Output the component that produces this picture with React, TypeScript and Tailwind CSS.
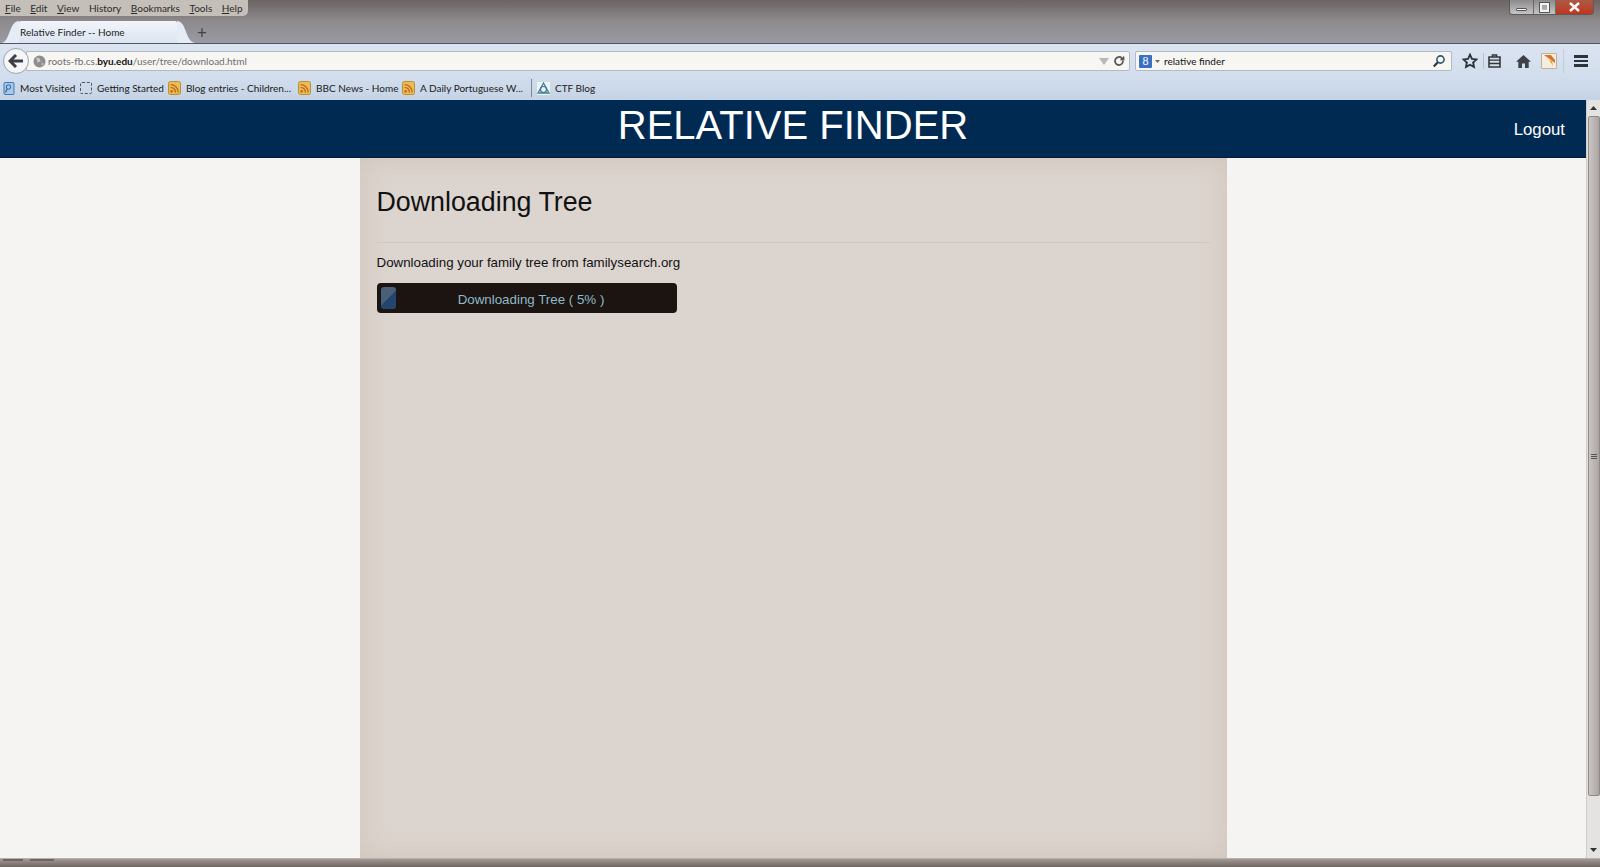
const ui = "font-['Lato','Noto_Sans',sans-serif]"

function Feed() {
  return (
    <svg width="13" height="14" viewBox="0 0 13 14" className="shrink-0">
      <rect x="0.5" y="0.5" width="12" height="13" rx="2" fill="#e8bd55" stroke="#b98f35" />
      <circle cx="3.6" cy="10.4" r="1.3" fill="#c9661c" />
      <path d="M2.5 6.4a5 5 0 0 1 5 5M2.5 3.6a7.8 7.8 0 0 1 7.8 7.8" fill="none" stroke="#c9661c" strokeWidth="1.4" />
    </svg>
  )
}

function Bookmark({ icon, label, width }: { icon: React.ReactNode; label: string; width: string }) {
  return (
    <div className={`flex items-center gap-[5px] ${width}`}>
      {icon}
      <span className="whitespace-nowrap">{label}</span>
    </div>
  )
}

function Menu() {
  const items = [
    ["F", "ile"],
    ["E", "dit"],
    ["V", "iew"],
    ["", "History"],
    ["B", "ookmarks"],
    ["T", "ools"],
    ["H", "elp"],
  ]
  return (
    <div className="flex h-[16px] w-[248px] items-center gap-[9.6px] rounded-br-[5px] bg-[#c4bfb8] pl-[5px] text-[10px] text-[#2c2a2a]">
      {items.map(([first, rest]) => (
        <span key={rest}>
          <span className="underline">{first}</span>
          {rest}
        </span>
      ))}
    </div>
  )
}

function WindowButtons() {
  return (
    <div className="flex h-[15px] w-[85px] overflow-hidden rounded-b-[4px] border border-t-0 border-[#5d5a5a]">
      <div className="flex w-[23px] items-end justify-center bg-gradient-to-b from-[#8d8a8a] to-[#c5c5c8] pb-[3px]">
        <div className="h-[3px] w-[11px] rounded-[1px] border border-[#555] bg-white" />
      </div>
      <div className="flex w-[23px] items-center justify-center border-x border-[#6d6a6a] bg-gradient-to-b from-[#8d8a8a] to-[#c5c5c8]">
        <div className="h-[9px] w-[9px] border-2 border-[#f3f3f3] outline outline-1 outline-[#555]" />
      </div>
      <div className="flex flex-1 items-center justify-center bg-gradient-to-b from-[#a85a45] to-[#c2321c] text-[12px] font-bold leading-none text-white">
        <svg width="13" height="10" viewBox="0 0 13 10">
          <path d="M2 1l9 8M11 1l-9 8" stroke="#fff" strokeWidth="2.4" />
        </svg>
      </div>
    </div>
  )
}

function TabStrip() {
  return (
    <div className="flex h-[23px] items-end pl-[1px]">
      <svg width="18" height="23" viewBox="0 0 18 23" className="shrink-0">
        <path d="M0 23C9 23 8 1 18 1V23Z" fill="#e6ecf5" />
      </svg>
      <div className="flex h-[22px] w-[158px] items-center rounded-t-[2px] bg-gradient-to-b from-[#f2f5fa] to-[#dbe4f1] pl-[1px] text-[10px] text-[#222]">
        Relative Finder -- Home
      </div>
      <svg width="19" height="23" viewBox="0 0 19 23" className="shrink-0">
        <path d="M0 1C10 1 8 23 19 23H0Z" fill="#e6ecf5" />
      </svg>
      <div className="ml-[1px] flex h-[22px] items-center text-[17px] leading-none text-[#444]">+</div>
    </div>
  )
}

function NavBar() {
  return (
    <div className="flex h-[32px] items-center bg-gradient-to-b from-[#dbe4f1] to-[#d2deed] pl-[3px] pr-[6px] pt-[2px]">
      <div className="z-10 flex h-[26px] w-[26px] shrink-0 items-center justify-center rounded-full border border-[#9aa3ae] bg-[#f5f6f8]">
        <svg width="16" height="14" viewBox="0 0 16 14">
          <path d="M8 1L2 7l6 6M2.5 7H15" fill="none" stroke="#3c4046" strokeWidth="3" />
        </svg>
      </div>
      <div className="-ml-[3px] flex h-[20px] w-[1104px] items-center rounded-r-[2px] border border-[#b3bac4] bg-[#f7f6f3] pl-[6px] pr-[4px] text-[10px] text-[#6d6d6d]">
        <svg width="13" height="13" viewBox="0 0 12 12" className="mr-[2px] shrink-0">
          <circle cx="6" cy="6" r="5.5" fill="#8e8e8e" />
          <path d="M3 2l3 1 1 3-3 1zM8 7l2 1-2 2z" fill="#c8c8c8" />
        </svg>
        <span>
          roots-fb.cs.<span className="font-bold text-[#111]">byu.edu</span>/user/tree/download.html
        </span>
        <svg width="10" height="7" viewBox="0 0 10 7" className="ml-auto shrink-0">
          <path d="M0 0h10L5 7z" fill="#b5b8bc" />
        </svg>
        <svg width="12" height="12" viewBox="0 0 24 24" fill="none" stroke="#555" strokeWidth="3.5" className="ml-[4px] shrink-0">
          <path d="M20 12a8 8 0 1 1-2.500-5.800L21 9" />
          <path d="M21 3v6h-6" />
        </svg>
      </div>
      <div className="ml-[5px] flex h-[20px] w-[317px] items-center rounded-[2px] border border-[#b3bac4] bg-[#f7f6f3] pl-[3px] pr-[5px] text-[10px] text-[#111]">
        <div className="flex h-[13px] w-[13px] shrink-0 items-center justify-center rounded-[1px] bg-[#3b6fc4] font-['Liberation_Serif',serif] text-[12px] leading-none text-white">
          8
        </div>
        <svg width="5" height="3" viewBox="0 0 5 3" className="ml-[3px] mr-[4px] shrink-0">
          <path d="M0 0h5L2.500 3z" fill="#666" />
        </svg>
        <span>relative finder</span>
        <svg width="14" height="14" viewBox="0 0 14 14" fill="none" className="ml-auto shrink-0">
          <circle cx="8.500" cy="5.500" r="3.600" stroke="#2f5878" strokeWidth="1.600" />
          <path d="M5.800 8.200L1.800 12.500" stroke="#2b3a48" strokeWidth="2.200" />
        </svg>
      </div>
      <div className="ml-[10px] flex items-center">
        <svg width="16" height="16" viewBox="0 0 24 24" fill="none" stroke="#2e3338" strokeWidth="2.800" className="shrink-0">
          <path d="M12 2.500l2.900 6.300 6.800.8-5 4.700 1.300 6.800-6-3.400-6 3.400 1.300-6.800-5-4.700 6.800-.8z" />
        </svg>
        <div className="ml-[5px] mr-[4px] h-[16px] w-px bg-[#b7c1ce]" />
        <svg width="13" height="14" viewBox="0 0 13 14" className="shrink-0">
          <path d="M4.500 2.500V1h4v1.500M1 3h11v10H1z" fill="#d8dee6" stroke="#33383e" strokeWidth="1.600" />
          <path d="M1 6.200h11M1 9.500h11" stroke="#33383e" strokeWidth="1.300" />
        </svg>
        <svg width="15" height="13" viewBox="0 0 15 13" className="ml-[15px] shrink-0">
          <path d="M7.500 0L0 6.800h2.300V13h3.700V8.500h3V13h3.700V6.800H15z" fill="#3c4248" />
        </svg>
        <div className="ml-[10px] h-[16px] w-[16px] shrink-0 overflow-hidden rounded-[1px] border border-[#b9b2a5] bg-[#f6eddc]">
          <svg width="14" height="14" viewBox="0 0 14 14">
            <path d="M2 1h7l4 5v3z" fill="#d9722a" />
            <path d="M7 6l3 1 1 5z" fill="#e7a33b" />
          </svg>
        </div>
        <div className="ml-[6px] h-[24px] w-px bg-[#c1ccda]" />
        <div className="ml-[10px] flex w-[14px] flex-col gap-[2px]">
          <div className="h-[2.500px] bg-[#2e3338]" />
          <div className="h-[2.500px] bg-[#2e3338]" />
          <div className="h-[2.500px] bg-[#2e3338]" />
        </div>
      </div>
    </div>
  )
}

function BookmarksBar() {
  return (
    <div className="flex h-[24px] items-center bg-gradient-to-b from-[#d2deed] to-[#c4d3e6] pl-[3px] text-[10px] text-[#1a1a1a]">
      <Bookmark
        width="w-[77px]"
        label="Most Visited"
        icon={
          <svg width="12" height="13" viewBox="0 0 11 13" className="shrink-0">
            <rect x="0.500" y="0.500" width="10" height="12" rx="1" fill="#a9c8e8" stroke="#3f78b5" />
            <circle cx="5" cy="5" r="2.200" fill="none" stroke="#2a64a5" />
            <path d="M3.500 7L2 10.500" stroke="#2a64a5" strokeWidth="1.200" />
          </svg>
        }
      />
      <Bookmark
        width="w-[88px]"
        label="Getting Started"
        icon={<div className="h-[12px] w-[12px] shrink-0 rounded-[2px] border border-dashed border-[#555]" />}
      />
      <Bookmark width="w-[130px]" label="Blog entries - Children..." icon={<Feed />} />
      <Bookmark width="w-[104px]" label="BBC News - Home" icon={<Feed />} />
      <Bookmark width="w-[129px]" label="A Daily Portuguese W..." icon={<Feed />} />
      <div className="mr-[5px] h-[18px] w-px bg-[#7f8791]" />
      <Bookmark
        width="w-auto"
        label="CTF Blog"
        icon={
          <svg width="13" height="13" viewBox="0 0 13 13" className="shrink-0">
            <rect width="13" height="13" fill="#eef3f6" />
            <path d="M6.500 1L1 11h11z" fill="none" stroke="#3f8a7a" strokeWidth="1.300" />
            <circle cx="6.500" cy="7.500" r="3" fill="none" stroke="#3e6fb5" strokeWidth="1.200" />
          </svg>
        }
      />
    </div>
  )
}

function Scrollbar() {
  return (
    <div className="flex w-[14px] shrink-0 flex-col items-center border-l border-[#cfcdc9] bg-[#e4e3e1]">
      <div className="flex h-[16px] items-center justify-center">
        <svg width="7" height="4" viewBox="0 0 7 4">
          <path d="M3.500 0L7 4H0z" fill="#333" />
        </svg>
      </div>
      <div className="flex h-[680px] w-[12px] items-center justify-center rounded-[2px] border border-[#8f8a88] bg-gradient-to-r from-[#cbc6c4] to-[#aaa5a3]">
        <div className="flex w-[6px] flex-col gap-[1px]">
          <div className="h-px bg-[#555]" />
          <div className="h-px bg-[#555]" />
          <div className="h-px bg-[#555]" />
        </div>
      </div>
      <div className="mt-auto flex h-[16px] items-center justify-center">
        <svg width="7" height="4" viewBox="0 0 7 4">
          <path d="M0 0h7L3.500 4z" fill="#333" />
        </svg>
      </div>
    </div>
  )
}

function ProgressBar() {
  return (
    <div className="relative flex h-[30px] w-[300px] items-center justify-center rounded-[4px] bg-[#1b1411] p-[3px]">
      <div className="absolute left-[4px] top-[4px] h-[22px] w-[15px] rounded-[3px] bg-[linear-gradient(135deg,#4a5f78_0%,#4a5f78_50%,#24466e_50%,#24466e_100%)]" />
      <span className="pl-[9px] pt-[3px] text-[13.33px] text-[#8fbac8]">Downloading Tree ( 5% )</span>
    </div>
  )
}

function App() {
  return (
    <div className={`flex h-screen w-full flex-col overflow-hidden bg-[#f5f4f2] ${ui}`}>
      <div className="flex h-[44px] shrink-0 flex-col border-b border-[#55565c] bg-gradient-to-b from-[#6c6462] via-[#8e8b8e] to-[#989aa3]">
        <div className="flex h-[20px] justify-between pr-[6px]">
          <Menu />
          <WindowButtons />
        </div>
        <TabStrip />
      </div>
      <NavBar />
      <BookmarksBar />

      <div className="flex min-h-0 flex-1">
        <div className="flex min-w-0 flex-1 flex-col font-['Liberation_Sans',Arial,sans-serif]">
          <header className="grid h-[58px] shrink-0 grid-cols-[1fr_auto_1fr] items-center border-b border-[#021c38] bg-[#012a52] text-white">
            <div />
            <h1 className="-mt-[7px] text-[40px] leading-none">RELATIVE FINDER</h1>
            <a className="justify-self-end pr-[21px] pt-[2px] text-[16.8px]">Logout</a>
          </header>
          <main className="mx-auto w-[867px] flex-1 bg-[#dcd4ce] pl-[17px] pr-[17px] pt-[28px] text-[#111] shadow-[inset_0_0_28px_rgba(190,175,160,0.4)]">
            <h2 className="text-[26.8px] leading-[32px]">Downloading Tree</h2>
            <hr className="mt-[24px] border-[#cfc7c0]" />
            <p className="mt-[10px] text-[13.33px] leading-[20px]">Downloading your family tree from familysearch.org</p>
            <div className="mt-[10px]">
              <ProgressBar />
            </div>
          </main>
        </div>
        <Scrollbar />
      </div>

      <div className="relative h-[9px] shrink-0 border-t border-[#b8b0aa] bg-gradient-to-b from-[#a39a95] to-[#6f6560]">
        <div className="absolute left-[3px] top-0 h-[2px] w-[20px] bg-[#6c6560]" />
        <div className="absolute left-[30px] top-0 h-[2px] w-[24px] bg-[#6c6560]" />
      </div>
    </div>
  )
}

export default App
